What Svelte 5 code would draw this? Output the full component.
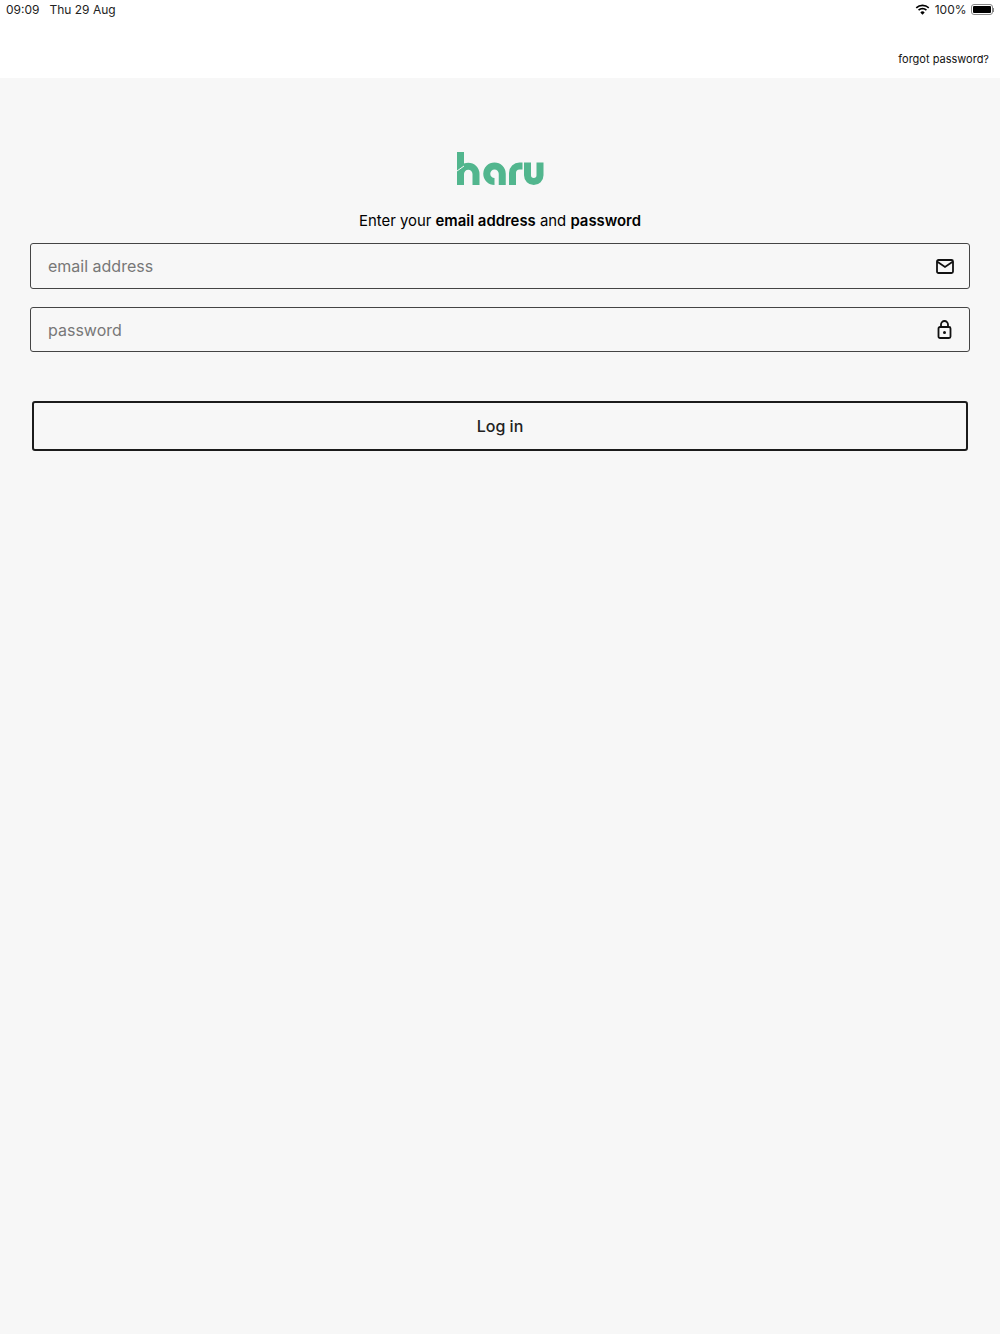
<script>
  let email = $state('')
  let password = $state('')
</script>

<div class="page">
  <div class="status-bar">
    <div class="clock">
      <span>09:09</span>
      <span>Thu 29 Aug</span>
    </div>
    <div class="status-right">
      <svg class="wifi" width="15" height="11" viewBox="0 0 15 11">
        <path d="M7.5 2.2c2.2 0 4.2.8 5.7 2.2l1.1-1.2A10 10 0 0 0 7.5.5 10 10 0 0 0 .7 3.2l1.1 1.2a8.300 8.300 0 0 1 5.700-2.200z" fill="#000" />
        <path d="M7.5 5.400c1.300 0 2.500.5 3.400 1.300l1.100-1.200a6.600 6.600 0 0 0-9 0l1.100 1.200c.9-.8 2.100-1.300 3.400-1.300z" fill="#000" />
        <path d="M7.500 10.800l2.200-2.400a3.200 3.200 0 0 0-4.400 0z" fill="#000" />
      </svg>
      <span>100%</span>
      <div class="battery-wrap">
        <span class="battery"><span class="battery-fill"></span></span>
        <span class="battery-cap"></span>
      </div>
    </div>
  </div>

  <header class="top-bar">
    <button class="forgot">forgot password?</button>
  </header>

  <main class="content">
    <svg class="logo" width="87" height="34" viewBox="0 0 87 34" aria-label="haru">
      <g fill="none" stroke="#52b68e" stroke-width="7">
        <path d="M3.500 0V33" />
        <path d="M3.500 22a7.750 7.750 0 0 1 15.500 0V33" />
        <path d="M45.250 33V21.750a7.750 7.750 0 1 0-7.750 7.750" />
        <path d="M55.500 33V21a7 7 0 0 1 7-7h3" />
        <path d="M70.500 10.500V23.250a6.250 6.250 0 0 0 12.500 0V10.500" />
      </g>
      <path d="M0 19 7 14" stroke="#f7f7f7" stroke-width="1" />
    </svg>

    <p class="prompt">Enter your <b>email address</b> and <b>password</b></p>

    <label class="field">
      <input type="email" placeholder="email address" bind:value={email} />
      <svg width="18" height="15" viewBox="0 0 18 15" fill="none" stroke="#111" stroke-width="1.800">
        <rect x="1" y="1" width="16" height="13" rx="1.500" />
        <path d="M1 2.500 9 8l8-5.500" />
      </svg>
    </label>

    <label class="field second">
      <input type="password" placeholder="password" bind:value={password} />
      <svg class="lock" width="15" height="19" viewBox="0 0 15 19" fill="none" stroke="#111" stroke-width="1.800">
        <rect x="1.500" y="7" width="12" height="11" rx="1.500" />
        <path d="M4 7V4.500a3.500 3.500 0 0 1 7 0V7" />
        <circle cx="7.500" cy="12.500" r="1.500" fill="#111" stroke="none" />
      </svg>
    </label>

    <button class="login">Log in</button>
  </main>
</div>

<style>
  :global(body) {
    margin: 0;
    background: #fff;
  }
  .page {
    height: 1334px;
    display: flex;
    flex-direction: column;
    font-family: Inter, "Open Sans", sans-serif;
    color: #111;
  }
  .status-bar {
    height: 20px;
    display: flex;
    align-items: center;
    justify-content: space-between;
    padding: 0 6px 1px;
    box-sizing: border-box;
    font-size: 12px;
    color: #222;
  }
  .clock { display: flex; gap: 10px; }
  .status-right { display: flex; align-items: center; gap: 5px; }
  .battery-wrap { display: flex; align-items: center; margin-left: -1px; }
  .battery {
    width: 22px;
    height: 11px;
    box-sizing: border-box;
    border: 1px solid #888;
    border-radius: 3px;
    padding: 1px;
    display: flex;
  }
  .battery-fill { flex: 1; background: #000; border-radius: 1px; }
  .battery-cap { width: 1.500px; height: 4px; background: #888; }
  .top-bar {
    height: 58px;
    box-sizing: border-box;
    display: flex;
    justify-content: flex-end;
    align-items: flex-start;
    padding: 30px 11px 0 0;
  }
  .forgot {
    border: none;
    background: none;
    padding: 0;
    font: 400 11px/18px Inter, sans-serif;
    color: #111;
  }
  .content {
    flex: 1;
    background: #f7f7f7;
    display: flex;
    flex-direction: column;
    padding: 74px 30px 0;
  }
  .logo { align-self: center; }
  .prompt {
    margin: 24px 0 11px;
    text-align: center;
    font-size: 14.900px;
    line-height: 22px;
    color: #000;
  }
  .prompt b { font-weight: 600; }
  .field {
    height: 46px;
    box-sizing: border-box;
    border: 1px solid #444;
    border-radius: 3px;
    display: flex;
    align-items: center;
    padding: 0 15px 0 17.500px;
    margin-bottom: 18px;
    margin-left: -0.500px;
  }
  .field.second { height: 45px; margin-bottom: 19px; }
  .field input {
    flex: 1;
    min-width: 0;
    border: none;
    outline: none;
    background: none;
    padding: 0;
    font: 400 16px Inter, sans-serif;
    color: #111;
  }
  .field input::placeholder { color: #777; opacity: 1; }
  .lock { margin-right: 2px; }
  .login {
    height: 50px;
    margin: 30px 2px 0;
    box-sizing: border-box;
    border: 2px solid #1c1c1c;
    border-radius: 3px;
    background: none;
    font: 500 16px Inter, sans-serif;
    color: #222;
  }
</style>
